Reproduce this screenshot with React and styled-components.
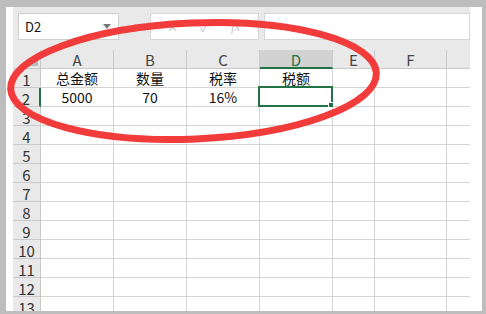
import React from "react";
import styled, { createGlobalStyle } from "styled-components";

const Global = createGlobalStyle`
  html, body { margin: 0; padding: 0; }
  body { width: 486px; height: 314px; overflow: hidden; font-family: "Noto Sans CJK SC", "Noto Sans", sans-serif; }
`;

const Frame = styled.div`
  position: relative;
  box-sizing: border-box;
  width: 486px;
  height: 314px;
  background: #bdbdbd;
  padding: 7px 4px 3px 6px;
  display: flex;
`;

const Window = styled.div`
  flex: 1;
  background: #ffffff;
  padding: 0 12px 0 7px;
  display: flex;
  overflow: hidden;
`;

const Sheet = styled.div`
  flex: 1;
  display: flex;
  flex-direction: column;
  background: #e9e9e9;
  overflow: hidden;
`;

const FormulaBar = styled.div`
  flex-shrink: 0;
  height: 43px;
  box-sizing: border-box;
  padding: 6px 0 10px 5px;
  display: flex;
  align-items: stretch;
`;

const NameBox = styled.div`
  width: 101px;
  box-sizing: border-box;
  background: #fff;
  border: 1px solid #cfcfcf;
  display: flex;
  align-items: center;
  justify-content: space-between;
  padding: 0 7px 0 6px;
  font-family: "Noto Sans CJK SC", sans-serif;
  font-size: 13px;
  color: #111;
`;

const Caret = styled.span`
  width: 0;
  height: 0;
  border-left: 4px solid transparent;
  border-right: 4px solid transparent;
  border-top: 5px solid #777;
  margin-top: -1px;
`;

const Dots = styled.div`
  width: 31px;
  display: flex;
  justify-content: center;
  align-items: center;
  color: #b5b5b5;
  font-size: 10px;
`;

const IconBox = styled.div`
  width: 109px;
  box-sizing: border-box;
  background: #fff;
  border: 1px solid #d6d6d6;
  display: flex;
  align-items: center;
  gap: 22px;
  padding-left: 16px;
  color: #c8c8c8;
  font-size: 13px;
`;

const Fx = styled.span`
  font-style: italic;
  font-family: "Liberation Serif", serif;
  font-size: 13px;
`;

const Input = styled.div`
  flex: 1;
  margin-left: 5px;
  box-sizing: border-box;
  background: #fff;
  border: 1px solid #d6d6d6;
`;

const Grid = styled.div`
  display: grid;
  grid-template-columns: 28px 73px 73px 73px 73px 42px 72px 23px;
  grid-auto-rows: 19px;
  flex: 1;
  min-height: 0;
  overflow: hidden;
  background: #fff;
`;

const Cell = styled.div`
  position: relative;
  box-sizing: border-box;
  border-right: ${(p) => (p.$last ? "none" : "1px solid #d4d4d4")};
  border-bottom: 1px solid #d4d4d4;
  background: #fff;
  display: flex;
  align-items: center;
  justify-content: center;
  font-family: "Noto Sans CJK SC", sans-serif;
  font-size: 14px;
  line-height: 1;
  color: #111;
  white-space: nowrap;
`;

const ColHead = styled(Cell)`
  background: ${(p) => (p.$active ? "#d2d2d2" : "#e9e9e9")};
  border-right: ${(p) => (p.$last ? "none" : "1px solid #c9c9c9")};
  border-bottom: ${(p) => (p.$active ? "2px solid #217346" : "1px solid #c9c9c9")};
  color: ${(p) => (p.$active ? "#217346" : "#444")};
  font-size: 15px;
  padding-top: 1px;
`;

const Corner = styled(Cell)`
  background: #e9e9e9;
  border-right: 1px solid #c9c9c9;
  border-bottom: 1px solid #c9c9c9;
  &::after {
    content: "";
    position: absolute;
    right: 2px;
    bottom: 2px;
    width: 0;
    height: 0;
    border-left: 11px solid transparent;
    border-bottom: 11px solid #b9b9b9;
  }
`;

const RowHead = styled(Cell)`
  background: #e9e9e9;
  border-right: ${(p) => (p.$active ? "2px solid #217346" : "1px solid #c9c9c9")};
  border-bottom: 1px solid #c9c9c9;
  color: #333;
  font-size: 15px;
  padding-top: 2px;
`;

const Selection = styled.div`
  position: absolute;
  left: -2px;
  top: -2px;
  right: -1px;
  bottom: -1px;
  border: 2px solid #217346;
  pointer-events: none;
  &::after {
    content: "";
    position: absolute;
    right: -4px;
    bottom: -4px;
    width: 5px;
    height: 5px;
    background: #217346;
    border: 1px solid #fff;
  }
`;

const Mark = styled.svg`
  position: absolute;
  left: 0;
  top: 0;
  width: 486px;
  height: 314px;
  pointer-events: none;
`;

const cols = ["A", "B", "C", "D", "E", "F", ""];
const data = {
  1: ["总金额", "数量", "税率", "税额"],
  2: ["5000", "70", "16%", ""],
};

export default function App() {
  const rows = Array.from({ length: 13 }, (_, i) => i + 1);
  return (
    <>
      <Global />
      <Frame>
        <Window>
          <Sheet>
            <FormulaBar>
              <NameBox>
                <span>D2</span>
                <Caret />
              </NameBox>
              <Dots>⋮</Dots>
              <IconBox>
                <span>✕</span>
                <span>✓</span>
                <Fx>fx</Fx>
              </IconBox>
              <Input />
            </FormulaBar>
            <Grid>
              <Corner />
              {cols.map((c, i) => (
                <ColHead key={i} $active={c === "D"} $last={i === cols.length - 1}>
                  {c}
                </ColHead>
              ))}
              {rows.map((r) => (
                <React.Fragment key={r}>
                  <RowHead $active={r === 2}>{r}</RowHead>
                  {cols.map((c, i) => (
                    <Cell key={i} $last={i === cols.length - 1}>
                      {(data[r] && data[r][i]) || ""}
                      {r === 2 && c === "D" && <Selection />}
                    </Cell>
                  ))}
                </React.Fragment>
              ))}
            </Grid>
          </Sheet>
        </Window>
        <Mark viewBox="0 0 486 314">
          <ellipse
            cx="193.5"
            cy="81"
            rx="183"
            ry="58"
            fill="none"
            stroke="#f23b3b"
            strokeWidth="7"
            transform="rotate(-2.5 193.5 81)"
          />
        </Mark>
      </Frame>
    </>
  );
}
